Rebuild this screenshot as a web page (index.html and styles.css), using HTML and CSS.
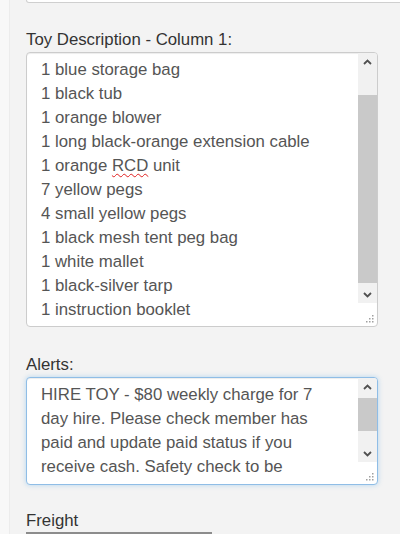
FILE: index.html
```html
<!DOCTYPE html>
<html lang="en">
<head>
    <meta charset="UTF-8">
    <meta name="viewport" content="width=device-width, initial-scale=1.0">
    <title>Toy Details</title>
    <link rel="stylesheet" href="styles.css">
</head>
<body>
    <div class="page">
        <div class="prev-tail"></div>

        <div class="field field-first">
            <label class="field-label">Toy Description - Column 1:</label>
            <div class="textbox textbox-list">
                <div class="lines">
                    <div>1 blue storage bag</div>
                    <div>1 black tub</div>
                    <div>1 orange blower</div>
                    <div>1 long black-orange extension cable</div>
                    <div>1 orange <span class="misspelt">RCD</span> unit</div>
                    <div>7 yellow pegs</div>
                    <div>4 small yellow pegs</div>
                    <div>1 black mesh tent peg bag</div>
                    <div>1 white mallet</div>
                    <div>1 black-silver tarp</div>
                    <div>1 instruction booklet</div>
                </div>
                <div class="scrollbar scrollbar-list">
                    <div class="sb-btn">
                        <svg width="9" height="6" viewBox="0 0 9 6"><path d="M1 5 L4.5 1.5 L8 5" fill="none" stroke="#505050" stroke-width="1.8"/></svg>
                    </div>
                    <div class="sb-track"><div class="sb-thumb thumb-list"></div></div>
                    <div class="sb-btn">
                        <svg width="9" height="6" viewBox="0 0 9 6"><path d="M1 1 L4.5 4.5 L8 1" fill="none" stroke="#505050" stroke-width="1.8"/></svg>
                    </div>
                </div>
                <svg class="grip" width="8" height="8" viewBox="0 0 8 8">
                    <rect x="6" y="0" width="1.5" height="1.5"/>
                    <rect x="3" y="3" width="1.5" height="1.5"/>
                    <rect x="6" y="3" width="1.5" height="1.5"/>
                    <rect x="0" y="6" width="1.5" height="1.5"/>
                    <rect x="3" y="6" width="1.5" height="1.5"/>
                    <rect x="6" y="6" width="1.5" height="1.5"/>
                </svg>
            </div>
        </div>

        <div class="field">
            <label class="field-label">Alerts:</label>
            <div class="textbox textbox-alerts focused">
                <p class="wrap-text">HIRE TOY - $80 weekly charge for 7 day hire. Please check member has paid and update paid status if you receive cash. Safety check to be completed before and after each hire.</p>
                <div class="scrollbar scrollbar-alerts">
                    <div class="sb-btn">
                        <svg width="9" height="6" viewBox="0 0 9 6"><path d="M1 5 L4.5 1.5 L8 5" fill="none" stroke="#505050" stroke-width="1.8"/></svg>
                    </div>
                    <div class="sb-track"><div class="sb-thumb thumb-alerts"></div></div>
                    <div class="sb-btn">
                        <svg width="9" height="6" viewBox="0 0 9 6"><path d="M1 1 L4.5 4.5 L8 1" fill="none" stroke="#505050" stroke-width="1.8"/></svg>
                    </div>
                </div>
                <svg class="grip" width="8" height="8" viewBox="0 0 8 8">
                    <rect x="6" y="0" width="1.5" height="1.5"/>
                    <rect x="3" y="3" width="1.5" height="1.5"/>
                    <rect x="6" y="3" width="1.5" height="1.5"/>
                    <rect x="0" y="6" width="1.5" height="1.5"/>
                    <rect x="3" y="6" width="1.5" height="1.5"/>
                    <rect x="6" y="6" width="1.5" height="1.5"/>
                </svg>
            </div>
        </div>

        <div class="field field-last">
            <label class="field-label">Freight</label>
            <div class="freight-input"></div>
        </div>
    </div>
</body>
</html>
```

FILE: styles.css
```css
html, body {
    margin: 0;
    overflow: hidden;
}
body {
    font-family: "Liberation Sans", Arial, sans-serif;
    font-size: 16.8px;
    background-color: #f8f8f8;
}
.page {
    margin-left: 9px;
    border-left: 1px solid #ececec;
    padding-left: 16px;
    background-color: #f3f3f3;
    min-height: 600px;
}
.prev-tail {
    height: 2px;
    background-color: #fff;
    border: 1px solid #cfcfcf;
    border-top: none;
    border-radius: 0 0 4px 4px;
    margin-right: -40px;
}
.field {
    margin-top: 28px;
}
.field-first {
    margin-top: 27px;
}
.field-last {
    margin-top: 26px;
}
.field-label {
    display: block;
    line-height: 20px;
    height: 20px;
    margin-bottom: 2px;
    color: #333;
}
.textbox {
    position: relative;
    box-sizing: border-box;
    width: 352px;
    background-color: #fff;
    border: 1px solid #ccc;
    border-radius: 4px;
    box-shadow: inset 0 1px 1px rgba(0, 0, 0, 0.075);
    padding: 5px 46px 0 14px;
    overflow: hidden;
    line-height: 24px;
    color: #555;
}
.textbox-list {
    height: 275px;
}
.textbox-alerts {
    height: 108px;
}
.focused {
    border-color: #8fbde6;
    box-shadow: inset 0 1px 1px rgba(0, 0, 0, 0.075), 0 0 5px rgba(102, 175, 233, 0.45);
}
.wrap-text {
    margin: 0;
}
.misspelt {
    text-decoration: underline wavy #e02020;
    text-decoration-skip-ink: none;
    text-underline-offset: 2px;
    text-decoration-thickness: 1px;
}
.scrollbar {
    position: absolute;
    top: 0;
    right: 0;
    width: 19px;
    background-color: #f1f1f1;
    display: flex;
    flex-direction: column;
}
.scrollbar-list {
    bottom: 23px;
}
.scrollbar-alerts {
    bottom: 22px;
}
.sb-btn {
    height: 17px;
    display: flex;
    align-items: center;
    justify-content: center;
}
.sb-track {
    flex: 1;
}
.sb-thumb {
    background-color: #c9c9c9;
}
.thumb-list {
    margin-top: 25px;
    height: 188px;
}
.thumb-alerts {
    margin-top: 3px;
    height: 33px;
}
.grip {
    position: absolute;
    right: 3px;
    bottom: 3px;
    fill: #a0a0a0;
}
.freight-input {
    width: 182px;
    height: 34px;
    margin-top: -1px;
    border: 2px solid #8c8c8c;
    background-color: #fff;
}
```
